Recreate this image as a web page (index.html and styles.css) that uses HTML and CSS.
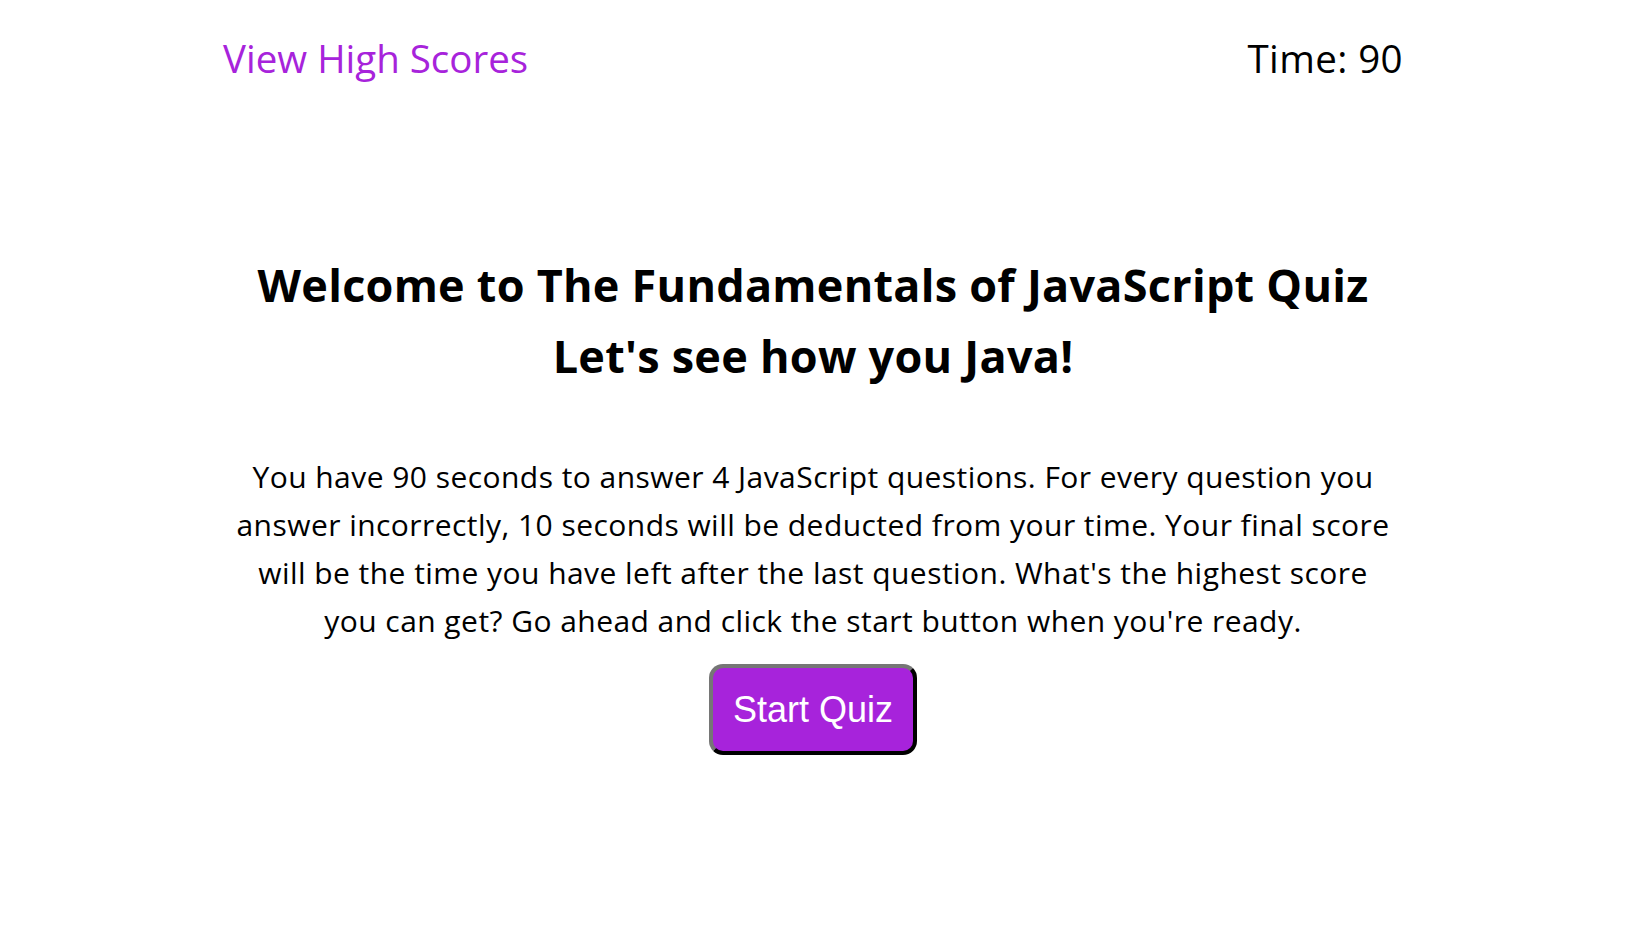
FILE: index.html
```html
<!DOCTYPE html>
<html lang="en">
<head>
<meta charset="utf-8">
<title>JavaScript Quiz</title>
<link rel="stylesheet" href="styles.css">
</head>
<body>
<div class="page">
  <header class="top-bar">
    <a class="high-scores" href="#">View High Scores</a>
    <div class="timer">Time: <span class="time-value">90</span></div>
  </header>
  <main class="intro">
    <h1 class="title">
      <span class="title-line">Welcome to The Fundamentals of JavaScript Quiz</span>
      <span class="title-line">Let's see how you Java!</span>
    </h1>
    <p class="description">You have 90 seconds to answer 4 JavaScript questions. For every question you answer incorrectly, 10 seconds will be deducted from your time. Your final score will be the time you have left after the last question. What's the highest score you can get? Go ahead and click the start button when you're ready.</p>
    <button class="start-btn" type="button">Start Quiz</button>
  </main>
</div>
</body>
</html>
```

FILE: styles.css
```css
html, body {
  margin: 0;
  padding: 0;
  background: #ffffff;
}

body {
  font-family: "Trebuchet MS", "Open Sans", Lato, sans-serif;
  color: #000000;
}

.page {
  padding: 0 239px 0 223px;
}

.top-bar {
  display: flex;
  justify-content: space-between;
  align-items: baseline;
  padding-top: 32px;
  font-size: 38.5px;
  line-height: 52px;
}

.high-scores {
  color: #a723db;
  text-decoration: none;
}

.timer {
  color: #000000;
  letter-spacing: 0.4px;
}

.intro {
  display: flex;
  flex-direction: column;
  align-items: center;
  text-align: center;
  padding-top: 165px;
}

.title {
  margin: 0;
  font-size: 45px;
  font-weight: 700;
  line-height: 71px;
  letter-spacing: 0.25px;
}

.title-line {
  display: block;
}

.description {
  max-width: 1160px;
  margin: 62px 0 0;
  font-size: 30px;
  line-height: 48px;
  letter-spacing: 0.45px;
}

.start-btn {
  margin-top: 19px;
  font-family: "Liberation Sans", Arial, sans-serif;
  font-size: 36px;
  line-height: 41px;
  letter-spacing: 0;
  color: #ffffff;
  background: #a723db;
  border: 4px outset #767676;
  border-color: #767676 #222222 #222222 #767676;
  border-radius: 14px;
  padding: 21px 20px;
  cursor: pointer;
}
```
